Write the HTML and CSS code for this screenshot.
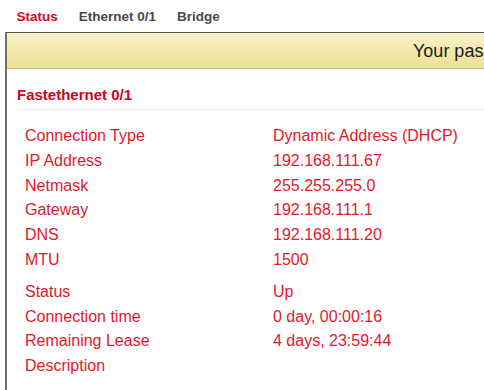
FILE: index.html
```html
<!DOCTYPE html>
<html lang="en">
<head>
    <meta charset="UTF-8">
    <meta name="viewport" content="width=device-width, initial-scale=1.0">
    <title>Status</title>
    <link rel="stylesheet" href="styles.css">
</head>
<body>
    <div class="tabs">
        <a class="tab active" href="#">Status</a>
        <a class="tab" href="#">Ethernet 0/1</a>
        <a class="tab" href="#">Bridge</a>
    </div>
    <div class="panel">
        <div class="notice">Your password has not been changed. Please change the default password.</div>
        <h2 class="section-title">Fastethernet 0/1</h2>
        <div class="info">
            <div class="info-group">
                <span class="label">Connection Type</span><span class="value">Dynamic Address (DHCP)</span>
                <span class="label">IP Address</span><span class="value">192.168.111.67</span>
                <span class="label">Netmask</span><span class="value">255.255.255.0</span>
                <span class="label">Gateway</span><span class="value">192.168.111.1</span>
                <span class="label">DNS</span><span class="value">192.168.111.20</span>
                <span class="label">MTU</span><span class="value">1500</span>
            </div>
            <div class="info-group">
                <span class="label">Status</span><span class="value">Up</span>
                <span class="label">Connection time</span><span class="value">0 day, 00:00:16</span>
                <span class="label">Remaining Lease</span><span class="value">4 days, 23:59:44</span>
                <span class="label">Description</span><span class="value"></span>
            </div>
        </div>
    </div>
</body>
</html>
```

FILE: styles.css
```css
html, body { margin: 0; background: #fff; }

body {
    font-family: "Liberation Sans", Arial, sans-serif;
    overflow: hidden;
}

.tabs {
    display: flex;
    height: 32px;
    align-items: center;
    padding-left: 6px;
}

.tab {
    font-size: 13.5px;
    font-weight: bold;
    color: #4a4a4a;
    text-decoration: none;
    padding: 0 10.5px;
}

.tab.active {
    color: #e8001c;
}

.panel {
    margin-left: 5px;
    border-left: 2px solid #6e6e6e;
    height: 358px;
}

.notice {
    height: 35px;
    line-height: 36px;
    border-top: 1px solid #555;
    border-bottom: 1px solid #cbbf80;
    background: linear-gradient(#f8f2c8, #ede196);
    font-size: 18px;
    color: #1a1a1a;
    white-space: nowrap;
    overflow: hidden;
    padding-left: 406px;
}

.section-title {
    margin: 0 0 0 10px;
    padding-top: 16px;
    height: 24px;
    line-height: 20px;
    font-size: 15px;
    font-weight: bold;
    color: #d4001e;
    border-bottom: 1px solid #eeeeee;
}

.info {
    padding: 14px 0 0 18px;
}

.info-group {
    display: grid;
    grid-template-columns: 248px 1fr;
    line-height: 24.8px;
    font-size: 16px;
    color: #e5172b;
}

.info-group + .info-group {
    margin-top: 7px;
}

.value {
    white-space: nowrap;
}
```
